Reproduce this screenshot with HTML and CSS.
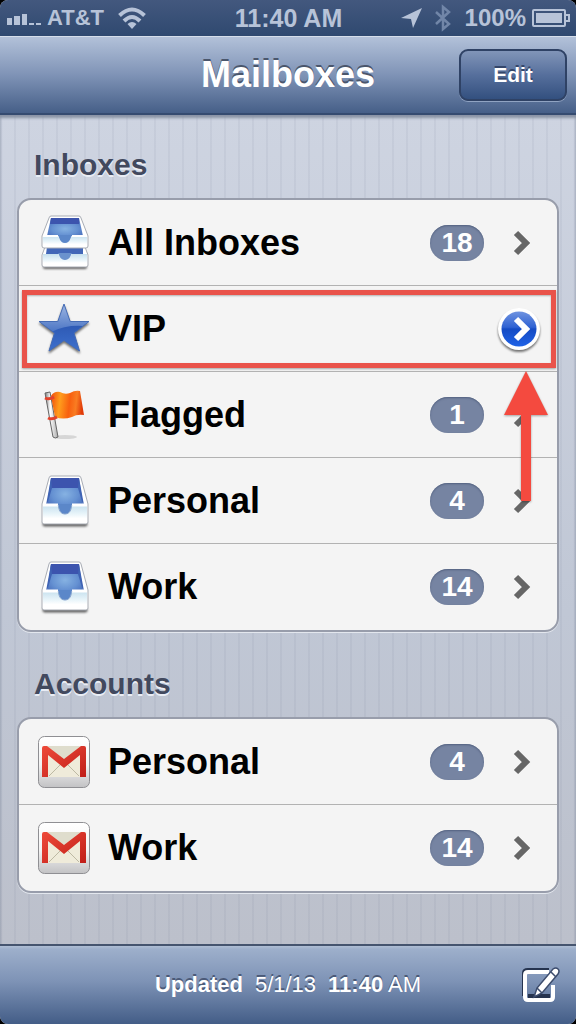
FILE: index.html
```html
<!DOCTYPE html>
<html lang="en">
<head>
<meta charset="utf-8">
<meta name="viewport" content="width=device-width, initial-scale=1">
<title>Mailboxes</title>
<link rel="stylesheet" href="styles.css">
</head>
<body>
<svg class="defs" width="0" height="0" aria-hidden="true">
  <defs>
    <radialGradient id="trayIn" cx="0.5" cy="0.6" r="0.6"><stop offset="0" stop-color="#86b2e2"/><stop offset="0.6" stop-color="#6591d2"/><stop offset="1" stop-color="#4a70bd"/></radialGradient>
    <linearGradient id="trayFront" x1="0" y1="0" x2="0" y2="1"><stop offset="0" stop-color="#c6e0ee"/><stop offset="0.5" stop-color="#e9f5fa"/><stop offset="0.75" stop-color="#fff"/></linearGradient>
    <linearGradient id="starTop" x1="0" y1="0" x2="0" y2="1"><stop offset="0" stop-color="#9db6e2"/><stop offset="0.6" stop-color="#4a74c4"/></linearGradient>
    <linearGradient id="starLow" x1="0" y1="0" x2="0" y2="1"><stop offset="0" stop-color="#2e5ab5"/><stop offset="1" stop-color="#3d70cd"/></linearGradient>
    <linearGradient id="flagFill" x1="0" y1="0" x2="1" y2="0.1"><stop offset="0" stop-color="#f04a0c"/><stop offset="0.3" stop-color="#ff9d1c"/><stop offset="0.6" stop-color="#f8600f"/><stop offset="0.8" stop-color="#f97d22"/><stop offset="1" stop-color="#e03a08"/></linearGradient>
    <linearGradient id="pole" x1="0" y1="0" x2="1" y2="0"><stop offset="0" stop-color="#777"/><stop offset="0.4" stop-color="#fff"/><stop offset="1" stop-color="#aaa"/></linearGradient>
    <linearGradient id="tile" x1="0" y1="0" x2="0" y2="1"><stop offset="0" stop-color="#fff"/><stop offset="0.55" stop-color="#f2f2f2"/><stop offset="1" stop-color="#c2c2c4"/></linearGradient>
    <linearGradient id="redM" x1="0" y1="0" x2="1" y2="1"><stop offset="0" stop-color="#ee4a3a"/><stop offset="1" stop-color="#c01d17"/></linearGradient>
    <linearGradient id="blueDisc" x1="0" y1="0" x2="0" y2="1"><stop offset="0" stop-color="#6f93e0"/><stop offset="0.45" stop-color="#2f62d3"/><stop offset="0.5" stop-color="#154bc4"/><stop offset="1" stop-color="#1f62e6"/></linearGradient>
    <symbol id="tray" viewBox="0 0 54 60">
      <path d="M8 53h40" stroke="#000" stroke-opacity=".6" stroke-width="5" stroke-linecap="round" filter="blur(1px)"/>
      <path d="M12 7q.4-2 2-2h28q1.600 0 2 2l7 26v18q0 2-2 2H7q-2 0-2-2V33z" fill="#fff" stroke="#a9adb5"/>
      <path d="M14 7h28l4 27H10z" fill="url(#trayIn)"/>
      <path d="M14 7h28v10H13z" fill="#3c54ae"/>
      <path d="M14 7l1 10-5 17H9zM42 7l-1 10 5 17h1z" fill="#3f63b4"/>
      <path d="M6 34h15c1 0 1 9 6.500 9s6-9 7-9h15.500v17q0 1-2 1H8q-2 0-2-1z" fill="url(#trayFront)"/>
      <path d="M6 34h15M35 34h15" stroke="#fff" stroke-width="3"/>
      <path d="M21 33c1 0 0 10 7 10s6-10 7-10z" fill="#5b87c9"/>
      <path d="M21 34c1 0 0 9 7 9s6-9 7-9" fill="none" stroke="#7f9dcb"/>
    </symbol>
    <symbol id="trays" viewBox="0 0 54 60">
      <path d="M8 54h40" stroke="#000" stroke-opacity=".6" stroke-width="4" stroke-linecap="round" filter="blur(1px)"/>
      <path d="M8 34h40l3 8v10q0 2-2 2H7q-2 0-2-2V42z" fill="#fff" stroke="#a9adb5"/>
      <path d="M10 34h36v7H9z" fill="#4267b8"/>
      <path d="M6 41h15c1 0 1 6 7 6s6-6 7-6h15v11q0 1-2 1H8q-2 0-2-1z" fill="url(#trayFront)"/>
      <path d="M21 40c1 0 1 7 7 7s6-7 7-7z" fill="#6a92cd"/>
      <path d="M12 5q.4-2 2-2h28q1.600 0 2 2l7 18v10q0 2-2 2H7q-2 0-2-2V23z" fill="#fff" stroke="#a9adb5"/>
      <path d="M14 5h28l4 18H10z" fill="url(#trayIn)"/>
      <path d="M14 5h28v6H13z" fill="#3c54ae"/>
      <path d="M6 23h15c1 0 1 7 7 7s6-7 7-7h15v10q0 1-2 1H8q-2 0-2-1z" fill="url(#trayFront)"/>
      <path d="M6 23h15M35 23h15" stroke="#fff" stroke-width="2"/>
      <path d="M21 22c1 0 1 8 7 8s6-8 7-8z" fill="#5b87c9"/>
    </symbol>
    <symbol id="gmail" viewBox="0 0 54 54">
      <rect x="1.500" y="1.500" width="51" height="51" rx="6" fill="url(#tile)" stroke="#8f8f93"/>
      <path d="M6 11h42v31H6z" fill="#efebda"/>
      <path d="M12 41l12-12M42 41L30 29" stroke="#bdb9a3" stroke-width="1"/>
      <path d="M10 11h34L27 25z" fill="#dfddcd"/>
      <path d="M5 13q0-2 2-2h3L27 24 44 11h3q2 0 2 2v29h-6V20L27 33 11 20v22H5z" fill="url(#redM)"/>
    </symbol>
    <symbol id="chevron" viewBox="0 0 48 48">
      <path d="M20 14l10 10-10 10" fill="none" stroke="#666" stroke-width="6"/>
    </symbol>
  </defs>
</svg>

<div class="screen">
  <div class="status">
    <div class="status-left">
      <svg class="signal" viewBox="0 0 35 16" aria-hidden="true"><path d="M0 8h5v7H0zM7 6h6v9H7zM15 4h5v11h-5zM22 13h5v2h-5zM29 13h5v2h-5z" fill="currentColor"/></svg>
      <span class="carrier">AT&amp;T</span>
      <svg class="wifi" viewBox="0 0 28 22" fill="none" stroke="currentColor" stroke-width="4" aria-hidden="true"><path d="M1.500 8.500q12.500-12 25 0M6 14q8-8 16 0"/><path d="M9.500 17q4.500-4 9 0L14 22z" fill="currentColor" stroke="none"/></svg>
    </div>
    <span class="clock">11:40 AM</span>
    <div class="status-right">
      <svg class="locate" viewBox="0 0 22 22" aria-hidden="true"><path d="M21 1L12 21l-2-9-10-1z" fill="currentColor"/></svg>
      <svg class="bluetooth" viewBox="0 0 16 28" fill="none" stroke="currentColor" stroke-width="2.500" aria-hidden="true"><path d="M1 8l13 12-6 5V3l6 5L1 20"/></svg>
      <span>100%</span>
      <svg class="battery" viewBox="0 0 38 20" aria-hidden="true"><rect x="1" y="2" width="32" height="16" rx="1" fill="none" stroke="currentColor" stroke-width="2"/><path d="M4 5h26v10H4z" fill="currentColor"/><path d="M34 7h3v6h-3" fill="none" stroke="currentColor" stroke-width="2"/></svg>
    </div>
  </div>

  <header class="nav">
    <h1 class="nav-title">Mailboxes</h1>
    <button class="edit" type="button">Edit</button>
  </header>

  <main class="content">
    <section class="group">
      <h2 class="group-title">Inboxes</h2>
      <nav class="card" aria-label="Inboxes">
        <a class="row" href="#all"><svg class="icon"><use href="#trays"/></svg><span class="name">All Inboxes</span><span class="count">18</span><svg class="more"><use href="#chevron"/></svg></a>
        <a class="row row-vip" href="#vip">
          <svg class="icon" viewBox="0 0 54 60" aria-hidden="true">
            <g class="lift">
              <path d="M27 5l6.200 17.500H52L37 34l5.500 18L27 41.500 12 52l5.500-18L2 22.500h18.800z" fill="url(#starTop)"/>
              <path d="M12 52l5.500-18-2-1.500Q28 26 46 27L37 34l5.500 18L27 41.500z" fill="url(#starLow)"/>
              <path d="M27 5l6.200 17.500H52L37 34l5.500 18L27 41.500 12 52l5.500-18L2 22.500h18.800z" fill="none" stroke="#446bb5" stroke-width="1"/>
            </g>
          </svg>
          <span class="name">VIP</span>
          <svg class="more" viewBox="0 0 48 48" aria-hidden="true"><g class="lift"><circle cx="23" cy="24" r="21" fill="#fff"/></g><circle cx="23" cy="24" r="17.500" fill="url(#blueDisc)"/><path d="M20 14l10 10-10 10" fill="none" stroke="#fff" stroke-width="6"/></svg>
          <span class="callout"></span>
          <svg class="arrow" viewBox="0 0 46 134" aria-hidden="true"><path d="M23 1l22 44H28v86H18V45H1z" fill="#f44a3f"/></svg>
        </a>
        <a class="row" href="#flagged">
          <svg class="icon" viewBox="0 0 54 60" aria-hidden="true">
            <ellipse cx="28" cy="52" rx="12" ry="2" fill="#000" opacity=".12"/>
            <path d="M8 8l5-1 8 45q-3 2-5 0z" fill="url(#pole)" stroke="#666"/>
            <path d="M14 11q3-5 9-4 5 3 10 1 5-3 10-2l4 24q-7-1-12 2-9 3-17 0z" fill="url(#flagFill)"/>
            <path d="M8 13q4 2 9-1M11 33q4 2 9-1" fill="none" stroke="#e2422b" stroke-width="3"/>
          </svg>
          <span class="name">Flagged</span><span class="count">1</span><svg class="more"><use href="#chevron"/></svg></a>
        <a class="row" href="#personal"><svg class="icon"><use href="#tray"/></svg><span class="name">Personal</span><span class="count">4</span><svg class="more"><use href="#chevron"/></svg></a>
        <a class="row" href="#work"><svg class="icon"><use href="#tray"/></svg><span class="name">Work</span><span class="count">14</span><svg class="more"><use href="#chevron"/></svg></a>
      </nav>
    </section>

    <section class="group">
      <h2 class="group-title">Accounts</h2>
      <nav class="card" aria-label="Accounts">
        <a class="row" href="#account-personal"><svg class="icon"><use href="#gmail"/></svg><span class="name">Personal</span><span class="count">4</span><svg class="more"><use href="#chevron"/></svg></a>
        <a class="row" href="#account-work"><svg class="icon"><use href="#gmail"/></svg><span class="name">Work</span><span class="count">14</span><svg class="more"><use href="#chevron"/></svg></a>
      </nav>
    </section>
  </main>

  <footer class="toolbar">
    <p class="updated"><b>Updated</b><span>5/1/13</span><span><b>11:40</b> AM</span></p>
    <button class="compose" type="button" aria-label="Compose">
      <svg viewBox="0 0 40 40" aria-hidden="true">
        <path d="M29 5H8q-4 0-4 3v23" fill="none" stroke="#26344f" stroke-width="4"/>
        <path d="M8 31h22" stroke="#26344f" stroke-width="4"/>
        <path d="M29 7H8q-3 0-3 3v22q0 3 3 3h22q3 0 3-3V20" fill="none" stroke="#fff" stroke-width="4"/>
        <path d="M14 32l3-9L33 4q3-2 5 0t0 5L22 28z" fill="#fff" stroke="#3c4c6d" stroke-width="1.500"/>
        <path d="M17 23l5 5M31 7l5 5" stroke="#3c4c6d" stroke-width="1.500"/>
      </svg>
    </button>
  </footer>
</div>
</body>
</html>
```
FILE: styles.css
```css
* { box-sizing: border-box; }

body {
  margin: 0;
  background: #000;
  font-family: "Liberation Sans", Arial, sans-serif;
}

.defs { position: absolute; }

.screen {
  display: flex;
  flex-direction: column;
  min-height: 100vh;
  overflow: hidden;
  border-radius: 8px;
  background: #c3c8d5;
}

.status {
  display: grid;
  grid-template-columns: 1fr auto 1fr;
  align-items: center;
  height: 36px;
  padding: 0 6px 0 7px;
  background: linear-gradient(#43587e, #2f4970);
  color: #b7c3d8;
  font-size: 24px;
  font-weight: bold;
  line-height: 36px;
}

.status-left,
.status-right { display: flex; align-items: center; }
.status-right { justify-content: flex-end; gap: 6px; }
.signal { width: 35px; height: 16px; margin-right: 5px; }
.carrier { font-size: 22px; }
.wifi { width: 28px; height: 22px; margin-left: 14px; }
.clock { font-size: 25px; }
.locate { width: 22px; height: 22px; margin-right: 6px; }
.bluetooth { width: 16px; height: 28px; margin-right: 8px; color: #7186a8; }
.battery { width: 38px; height: 20px; }

.nav {
  display: grid;
  grid-template-columns: 1fr auto 1fr;
  align-items: center;
  height: 79px;
  padding: 0 9px;
  border-top: 1px solid #d5deea;
  border-bottom: 2px solid #354b70;
  background: linear-gradient(#b2c1d9, #7f93b6 50%, #465f88);
}

.nav-title {
  grid-column: 2;
  margin: 0;
  color: #fff;
  font-size: 36px;
  line-height: 40px;
  text-shadow: 0 -2px 0 #4a566c;
}

.edit {
  justify-self: end;
  width: 108px;
  height: 52px;
  padding: 0;
  border: 2px solid #2f4265;
  border-radius: 9px;
  background: linear-gradient(#8195b8, #566f9c 50%, #33507f);
  box-shadow: 0 1px 0 #90a3c2;
  color: #fff;
  font: bold 21px/24px "Liberation Sans", Arial, sans-serif;
  text-shadow: 0 -2px 0 #34466b;
}

.content {
  flex: 1;
  padding: 32px 17px 40px;
  background:
    repeating-linear-gradient(90deg, #5a648012 0 2px, #ffffff00 2px 14px),
    linear-gradient(#ced4e1, #c0c7d5 60%, #bcc0cb);
  box-shadow: inset 0 3px 3px #8993a5;
}

.group + .group { margin-top: 34px; }

.group-title {
  margin: 0 0 15px 17px;
  color: #42495e;
  font-size: 30px;
  line-height: 36px;
  text-shadow: 0 2px 0 #e9edf5;
}

.card {
  border: 2px solid #989dab;
  border-radius: 14px;
  background: #f4f4f4;
  box-shadow: 0 1px 0 #e3e7ee;
}

.row {
  display: flex;
  align-items: center;
  height: 86px;
  padding: 0 13px 0 18px;
  border-bottom: 1px solid #b2b2b2;
  color: #000;
  text-decoration: none;
}

.row:last-child { border-bottom: 0; }
.row-vip { position: relative; }

.icon { flex: none; width: 54px; height: 60px; margin-right: 17px; }
.name { flex: 1; font-size: 36px; font-weight: bold; line-height: 42px; }

.count {
  width: 54px;
  margin-right: 12px;
  border-radius: 18px;
  background: #7684a2;
  box-shadow: inset 0 1px 2px #52607f;
  color: #fff;
  font-size: 28px;
  font-weight: bold;
  line-height: 36px;
  text-align: center;
}

.more { flex: none; width: 48px; height: 48px; overflow: visible; }
.lift { filter: drop-shadow(0 2px 1px #0008); }

.callout {
  position: absolute;
  inset: 4px 1px 3px 3px;
  border: 5px solid #e9534a;
  box-shadow: 0 1px 2px #0005, inset 0 1px 2px #0004;
}

.arrow {
  position: absolute;
  z-index: 1;
  top: 84px;
  right: 8px;
  width: 46px;
  height: 134px;
  filter: drop-shadow(0 1px 1px #0005);
}

.toolbar {
  display: grid;
  grid-template-columns: 1fr auto 1fr;
  align-items: center;
  height: 80px;
  padding: 0 16px;
  border-top: 2px solid #46556f;
  background: linear-gradient(#b0bfd5, #9dafcb 4%, #7e93b6 45%, #435d87);
  color: #fff;
}

.updated {
  display: flex;
  grid-column: 2;
  gap: 12px;
  margin: 0;
  font-size: 22px;
  line-height: 28px;
  text-shadow: 0 -2px 0 #4b5a78;
}

.compose {
  justify-self: end;
  width: 40px;
  height: 40px;
  padding: 0;
  border: 0;
  background: none;
}
```
